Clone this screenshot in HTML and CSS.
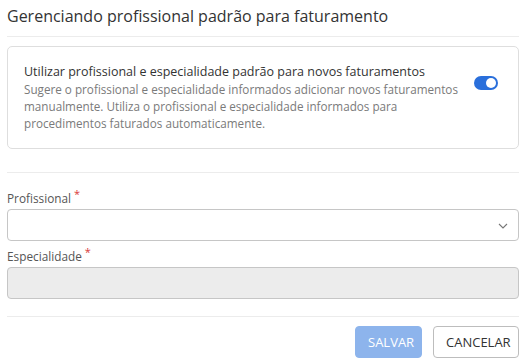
FILE: index.html
```html
<!DOCTYPE html>
<html lang="pt-BR">
<head>
    <meta charset="UTF-8">
    <title>Gerenciando profissional padrão para faturamento</title>
    <link rel="stylesheet" href="styles.css">
</head>
<body>
    <div class="modal">
        <h2 class="modal-title">Gerenciando profissional padrão para faturamento</h2>
        <hr class="divider">

        <div class="option-card flex">
            <div class="option-text">
                <div class="option-title">Utilizar profissional e especialidade padrão para novos faturamentos</div>
                <p class="option-desc">Sugere o profissional e especialidade informados adicionar novos faturamentos manualmente. Utiliza o profissional e especialidade informados para procedimentos faturados automaticamente.</p>
            </div>
            <span class="toggle"><span class="toggle-knob"></span></span>
        </div>

        <hr class="divider mid">

        <div class="field first">
            <label class="field-label">Profissional<span class="req">*</span></label>
            <div class="select-box">
                <svg class="chevron" width="10" height="6" viewBox="0 0 10 6"><path d="M1 1l4 4 4-4" fill="none" stroke="#777" stroke-width="1.1"/></svg>
            </div>
        </div>

        <div class="field">
            <label class="field-label">Especialidade<span class="req">*</span></label>
            <div class="input-box disabled"></div>
        </div>

        <hr class="divider bottom">

        <div class="actions flex">
            <button class="btn btn-primary">SALVAR</button>
            <button class="btn btn-outline">CANCELAR</button>
        </div>
    </div>
</body>
</html>
```

FILE: styles.css
```css
*{
    margin:0;
    padding:0;
    box-sizing: border-box;
}
body{
    font-family:"Open Sans",sans-serif;
    color:#333;
    background:#fff;
}
.flex{
    display:flex;
    align-items:center;
}
.modal{
    padding: 4px 7px 0 7px;
}
.modal-title{
    font-size:16px;
    font-weight:400;
    line-height:24px;
    color:#333;
}
.divider{
    border:none;
    border-top:1px solid #ececec;
    margin-top:8px;
}
.option-card{
    margin-top:9px;
    border:1px solid #dedede;
    border-radius:5px;
    padding:14px 20px 15px 16px;
    justify-content:space-between;
    height:103px;
}
.option-title{
    font-size:12.5px;
    line-height:18px;
    color:#333;
}
.option-desc{
    font-size:11.7px;
    line-height:17px;
    color:#7a7a7a;
    max-width:440px;
}
.toggle{
    width:24px;
    height:14px;
    border-radius:7px;
    background:#2a6fdb;
    position:relative;
    flex-shrink:0;
    margin-top:-28px;
}
.toggle-knob{
    position:absolute;
    right:2px;
    top:2px;
    width:10px;
    height:10px;
    border-radius:50%;
    background:#fff;
}
.divider.mid{
    margin-top:23px;
}
.field{
    margin-top:7px;
}
.field.first{
    margin-top:17px;
}
.field-label{
    display:block;
    font-size:11.8px;
    line-height:16px;
    color:#555;
    font-weight:400;
}
.req{
    color:#d93a3a;
    font-size:11px;
    vertical-align:top;
    position:relative;
    top:-4px;
    margin-left:3px;
}
.select-box,
.input-box{
    height:32px;
    border:1px solid #c6c6c6;
    border-radius:4px;
    background:#fff;
    margin-top:3px;
    position:relative;
}
.chevron{
    position:absolute;
    right:10px;
    top:13px;
}
.input-box.disabled{
    background:#ececec;
}
.divider.bottom{
    margin-top:17px;
}
.actions{
    justify-content:flex-end;
    gap:11px;
    margin-top:9px;
}
.btn{
    height:32px;
    border-radius:4px;
    font-family:"Open Sans",sans-serif;
    font-size:13px;
    padding:0 12px;
    cursor:pointer;
}
.btn-primary{
    background:#8db4ec;
    border:1px solid #8db4ec;
    color:#fff;
    width:67px;
}
.btn-outline{
    background:#fff;
    border:1px solid #bdbdbd;
    color:#333;
    width:86px;
}
```
